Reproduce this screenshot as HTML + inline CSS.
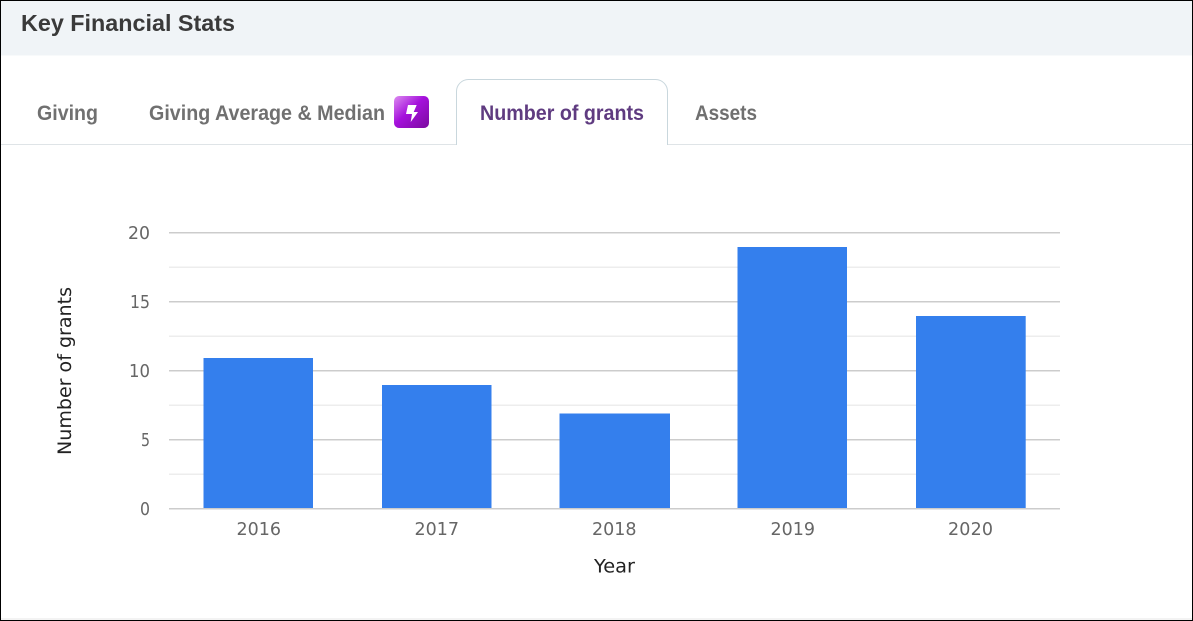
<!DOCTYPE html>
<html><head><meta charset="utf-8"><title>Key Financial Stats</title>
<style>html,body{margin:0;padding:0;background:#fff;width:1193px;height:621px;overflow:hidden}svg{display:block}</style>
</head><body>
<svg width="1193" height="621" viewBox="0 0 1193 621" xmlns="http://www.w3.org/2000/svg">
<defs><linearGradient id="g" x1="0" y1="0" x2="1" y2="1"><stop offset="0" stop-color="#dc8cf0"/><stop offset=".45" stop-color="#a511dc"/><stop offset="1" stop-color="#7a0a9e"/></linearGradient></defs>
<rect width="1193" height="621" fill="#fff"/>
<rect x="1" y="1" width="1191" height="54.5" fill="#f0f4f7"/>
<rect x="1" y="618" width="1191" height="2" fill="#f3f3f3"/>
<g font-family="'Liberation Sans',sans-serif" font-weight="700">
<text x="21" y="31" font-size="23" fill="#3a3a3a" textLength="214" lengthAdjust="spacingAndGlyphs">Key Financial Stats</text>
<g font-size="21" fill="#707070">
<text x="37" y="120" textLength="61" lengthAdjust="spacingAndGlyphs">Giving</text>
<text x="149" y="120" textLength="236" lengthAdjust="spacingAndGlyphs">Giving Average &amp; Median</text>
<text x="695" y="120" textLength="62" lengthAdjust="spacingAndGlyphs">Assets</text>
</g>
<line x1="1" y1="144.5" x2="1192" y2="144.5" stroke="#dfe4e7"/>
<path d="M456.5 145V92a12 12 0 0 1 12-12.5h187a12 12 0 0 1 12 12.500V145" fill="#fff" stroke="#c9d7dd"/>
<rect x="457" y="144" width="210" height="2" fill="#fff"/>
<text x="480" y="120" font-size="21" fill="#5f3b80" textLength="164" lengthAdjust="spacingAndGlyphs">Number of grants</text>
</g>
<rect x="394" y="96" width="35" height="32" rx="5" fill="url(#g)"/>
<path d="M408 105h8.700l-3 7h4.300l-7.300 10 1.300-8h-6z" fill="#fff"/>
<g fill="none">
<g stroke="#ededed" stroke-width="1.500">
<path d="M169 267.200H1060M169 336.200H1060M169 405.200H1060M169 474.200H1060"/>
</g>
<g stroke="#cccccc" stroke-width="1.500">
<path d="M169 232.700H1060M169 301.700H1060M169 370.700H1060M169 439.700H1060M169 508.700H1060"/>
</g>
</g>
<g fill="#347fed">
<rect x="203.500" y="358" width="109.500" height="150"/>
<rect x="382" y="385" width="109.500" height="123"/>
<rect x="559.500" y="413.500" width="110.500" height="94.500"/>
<rect x="737.500" y="247" width="109.500" height="261"/>
<rect x="916" y="316" width="109.700" height="192"/>
</g>
<g font-family="'DejaVu Sans',sans-serif" font-size="17.500" fill="#666" lengthAdjust="spacingAndGlyphs">
<text x="128" y="239" textLength="22" lengthAdjust="spacingAndGlyphs">20</text>
<text x="130" y="308" textLength="20" lengthAdjust="spacingAndGlyphs">15</text>
<text x="129" y="377" textLength="21" lengthAdjust="spacingAndGlyphs">10</text>
<text x="141" y="446" textLength="9" lengthAdjust="spacingAndGlyphs">5</text>
<text x="140" y="515" textLength="10" lengthAdjust="spacingAndGlyphs">0</text>
<text x="236.500" y="535" textLength="44.500" lengthAdjust="spacing">2016</text>
<text x="414.500" y="535" textLength="44.500" lengthAdjust="spacing">2017</text>
<text x="592" y="535" textLength="44.500" lengthAdjust="spacing">2018</text>
<text x="770.500" y="535" textLength="44.500" lengthAdjust="spacing">2019</text>
<text x="948" y="535" textLength="45" lengthAdjust="spacing">2020</text>
</g>
<g font-family="'DejaVu Sans',sans-serif" font-size="19" fill="#222">
<text x="594" y="572.500" textLength="41" lengthAdjust="spacingAndGlyphs">Year</text>
<text transform="translate(71 455) rotate(-90)" textLength="168" lengthAdjust="spacingAndGlyphs">Number of grants</text>
</g>
<rect x=".5" y=".5" width="1192" height="620" fill="none" stroke="#000" stroke-width="1"/>
</svg>
</body></html>
